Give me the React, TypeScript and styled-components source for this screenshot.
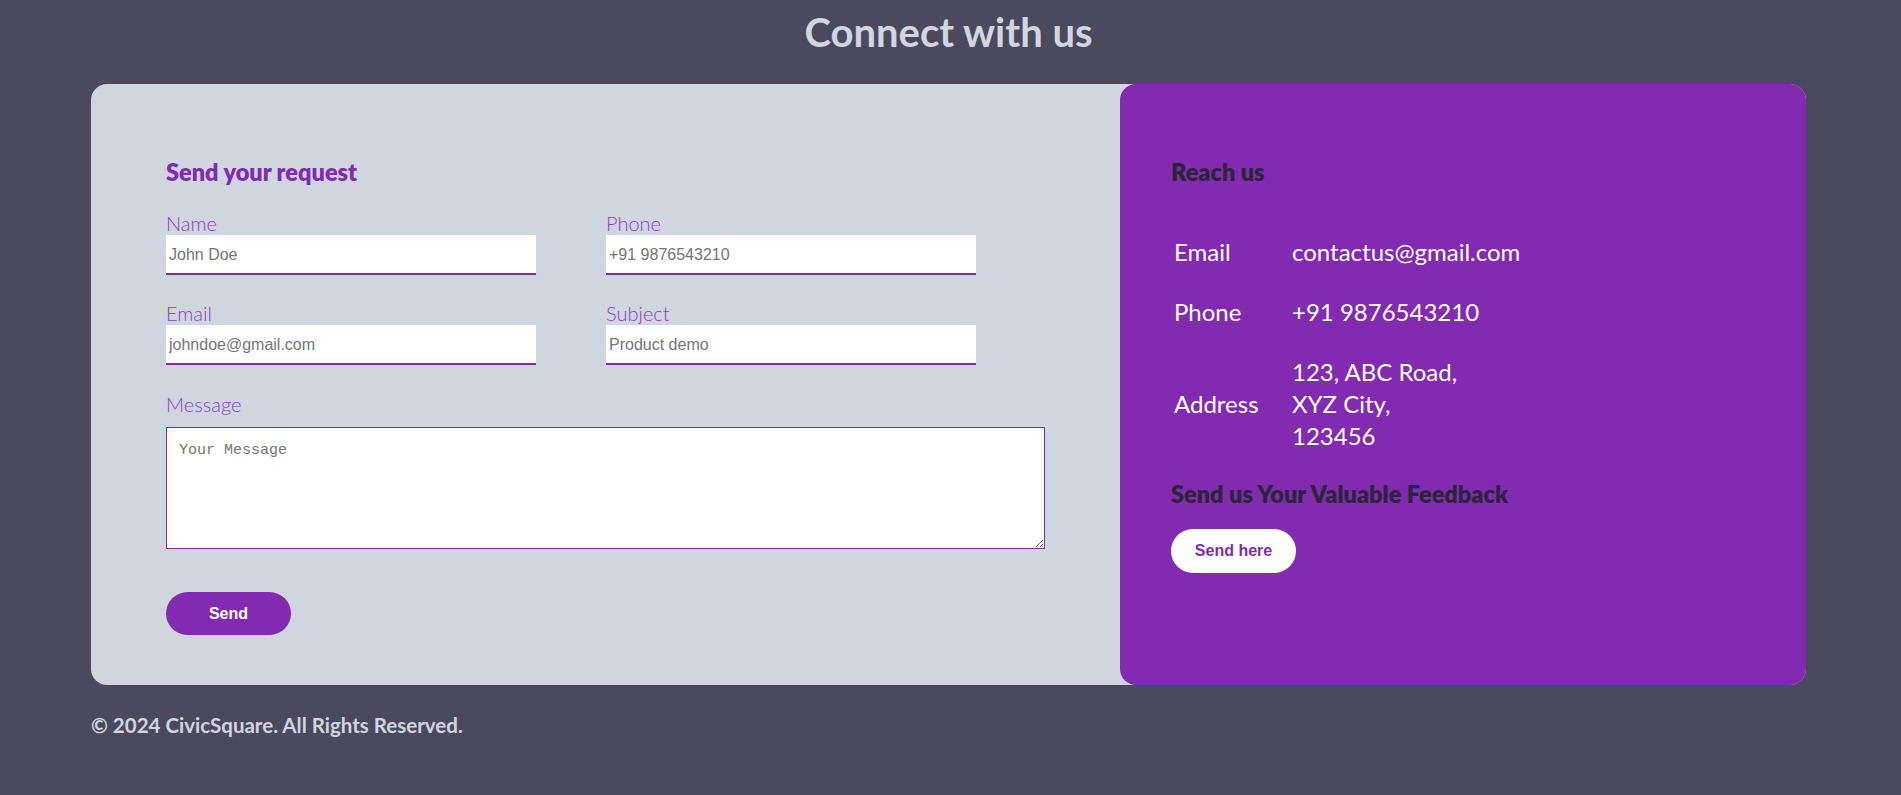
import styled, { createGlobalStyle } from "styled-components";

const GlobalStyle = createGlobalStyle`
  html, body {
    margin: 0;
    padding: 0;
    background: #4b495d;
  }
  * {
    box-sizing: border-box;
  }
`;

const purple = "#822ab0";

function App() {
  return (
    <StPage>
      <GlobalStyle />
      <StTitle>Connect with us</StTitle>
      <StCard>
        <StForm>
          <StFormTitle>Send your request</StFormTitle>
          <StFieldGrid>
            <StField>
              <StLabel>Name</StLabel>
              <StInput placeholder="John Doe" />
            </StField>
            <StField>
              <StLabel>Phone</StLabel>
              <StInput placeholder="+91 9876543210" />
            </StField>
            <StField>
              <StLabel>Email</StLabel>
              <StInput placeholder="johndoe@gmail.com" />
            </StField>
            <StField>
              <StLabel>Subject</StLabel>
              <StInput placeholder="Product demo" />
            </StField>
          </StFieldGrid>
          <StMessageLabel>Message</StMessageLabel>
          <StTextArea placeholder="Your Message" />
          <StSendBtn type="button">Send</StSendBtn>
        </StForm>
        <StReach>
          <StReachTitle>Reach us</StReachTitle>
          <StInfoTable>
            <tbody>
              <tr>
                <StInfoKey>Email</StInfoKey>
                <StInfoValue>contactus@gmail.com</StInfoValue>
              </tr>
              <tr>
                <StInfoKey>Phone</StInfoKey>
                <StInfoValue>+91 9876543210</StInfoValue>
              </tr>
              <tr>
                <StInfoKey>Address</StInfoKey>
                <StInfoValue>
                  123, ABC Road,
                  <br />
                  XYZ City,
                  <br />
                  123456
                </StInfoValue>
              </tr>
            </tbody>
          </StInfoTable>
          <StFeedbackTitle>Send us Your Valuable Feedback</StFeedbackTitle>
          <StFeedbackBtn type="button">Send here</StFeedbackBtn>
        </StReach>
      </StCard>
      <StFooter>© 2024 CivicSquare. All Rights Reserved.</StFooter>
    </StPage>
  );
}

const StPage = styled.div`
  width: 1715px;
  margin-left: 91px;
  padding: 8px 0 40px;
  font-family: "Lato", "Noto Sans", sans-serif;
`;

const StTitle = styled.h1`
  margin: 0 0 28px;
  text-align: center;
  font-size: 40px;
  line-height: 48px;
  font-weight: 700;
  color: #d0d6e0;
`;

const StCard = styled.section`
  display: flex;
  background: #d0d6e0;
  border-radius: 16px;
`;

const StForm = styled.form`
  flex: 0 0 60%;
  display: flex;
  flex-direction: column;
  align-items: flex-start;
  padding: 75px 75px 50px;
`;

const StFormTitle = styled.h2`
  margin: 0 0 28px;
  font-size: 23.5px;
  line-height: 26px;
  font-weight: 800;
  color: ${purple};
`;

const StFieldGrid = styled.div`
  display: grid;
  grid-template-columns: 370px 370px;
  column-gap: 70px;
  row-gap: 28px;
`;

const StField = styled.div`
  display: flex;
  flex-direction: column;
  gap: 2px;
`;

const StLabel = styled.label`
  display: block;
  font-size: 20px;
  line-height: 20px;
  font-weight: 300;
  color: #8a40c0;
`;

const StMessageLabel = styled(StLabel)`
  margin: 29px 0 13px;
`;

const StInput = styled.input`
  width: 370px;
  height: 40px;
  padding: 2px 3px 0;
  border: 0;
  border-bottom: 2px solid ${purple};
  background: #ffffff;
  font-family: "Liberation Sans", Arial, sans-serif;
  font-size: 16px;
  color: #333333;
  outline: none;

  &::placeholder {
    color: #757575;
  }
`;

const StTextArea = styled.textarea`
  width: 879px;
  height: 122px;
  padding: 14px 12px;
  border: 1px solid ${purple};
  background: #ffffff;
  font-family: "Liberation Mono", "DejaVu Sans Mono", monospace;
  font-size: 15px;
  outline: none;

  &::placeholder {
    color: #757575;
  }
`;

const StSendBtn = styled.button`
  margin-top: 43px;
  width: 125px;
  height: 43px;
  border: 0;
  border-radius: 25px;
  background: ${purple};
  color: #ffffff;
  font-family: "Liberation Sans", Arial, sans-serif;
  font-size: 16px;
  font-weight: 700;
  cursor: pointer;
`;

const StReach = styled.aside`
  flex: 1;
  display: flex;
  flex-direction: column;
  align-items: flex-start;
  padding: 75px 51px 50px;
  background: ${purple};
  border-radius: 16px;
`;

const StReachTitle = styled.h3`
  margin: 0 0 37px;
  font-size: 23.5px;
  line-height: 26px;
  font-weight: 800;
  color: #2b2538;
`;

const StInfoTable = styled.table`
  border-collapse: collapse;
  color: #ffffff;
  font-size: 24px;
  line-height: 32px;
`;

const StInfoKey = styled.td`
  width: 121px;
  padding: 14px 0 14px 3px;
  vertical-align: middle;
  font-weight: 400;
`;

const StInfoValue = styled.td`
  padding: 14px 0;
  vertical-align: middle;
`;

const StFeedbackTitle = styled.h3`
  margin: 15px 0 22px;
  font-size: 23.5px;
  line-height: 26px;
  font-weight: 800;
  color: #2b2538;
`;

const StFeedbackBtn = styled.button`
  width: 125px;
  height: 44px;
  border: 0;
  border-radius: 25px;
  background: #ffffff;
  color: ${purple};
  font-family: "Liberation Sans", Arial, sans-serif;
  font-size: 16px;
  font-weight: 700;
  cursor: pointer;
`;

const StFooter = styled.footer`
  margin-top: 28px;
  font-size: 20.5px;
  line-height: 24px;
  font-weight: 700;
  color: #d0d6e0;
`;

export default App;
